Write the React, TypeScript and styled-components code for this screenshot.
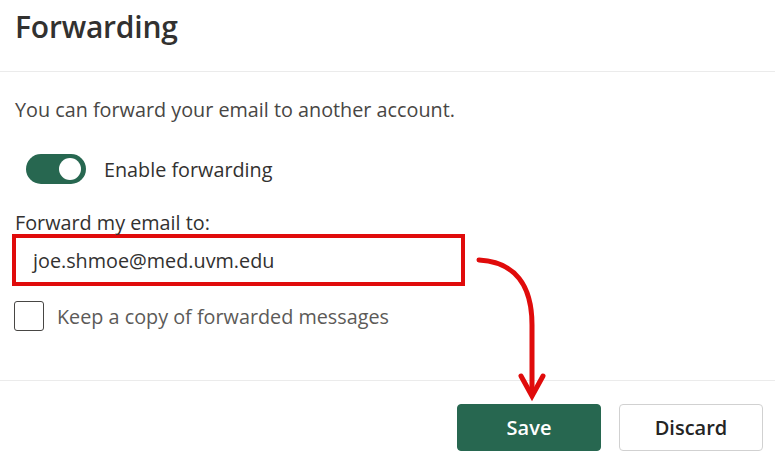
import React from 'react';
import styled, { createGlobalStyle } from 'styled-components';

const GlobalStyle = createGlobalStyle`
  html, body {
    margin: 0;
    padding: 0;
    background: #ffffff;
  }
  body {
    font-family: "Open Sans", "Noto Sans", "Liberation Sans", sans-serif;
    color: #323130;
  }
`;

const Page = styled.div`
  position: relative;
  width: 775px;
  height: 460px;
  overflow: hidden;
  background: #ffffff;
`;

const Header = styled.div`
  height: 72px;
  box-sizing: border-box;
  padding: 6px 15px 0;
  border-bottom: 1px solid #ebebeb;
`;

const Title = styled.h1`
  margin: 0;
  font-size: 30px;
  line-height: 42px;
  font-weight: 600;
  color: #323130;
  letter-spacing: -0.2px;
`;

const Body = styled.div`
  height: 309px;
  box-sizing: border-box;
  padding: 25px 15px 0;
  border-bottom: 1px solid #ebebeb;
`;

const Description = styled.p`
  margin: 0;
  font-size: 19.8px;
  line-height: 26px;
  color: #484644;
`;

const ToggleRow = styled.label`
  display: flex;
  align-items: center;
  gap: 18px;
  margin: 31px 0 0 11px;
  font-size: 19.8px;
  color: #323130;
`;

const Toggle = styled.span<{ on: boolean }>`
  position: relative;
  display: inline-block;
  flex: none;
  width: 60px;
  height: 30px;
  border-radius: 15px;
  background: ${p => (p.on ? '#276750' : '#c8c6c4')};
  &::after {
    content: '';
    position: absolute;
    top: 4px;
    left: ${p => (p.on ? '33px' : '4px')};
    width: 22px;
    height: 22px;
    border-radius: 50%;
    background: #ffffff;
  }
`;

const FieldLabel = styled.div`
  margin-top: 27px;
  font-size: 19.8px;
  line-height: 24px;
  color: #323130;
`;

const EmailInput = styled.div`
  box-sizing: border-box;
  width: 453px;
  height: 52px;
  margin: -1px 0 0 -3px;
  padding: 0 0 0 17px;
  display: flex;
  align-items: center;
  border: 4px solid #e00b0b;
  font-size: 19.8px;
  color: #323130;
`;

const CheckRow = styled.label`
  display: flex;
  align-items: center;
  gap: 13px;
  margin: 15px 0 0 -1px;
  font-size: 19.8px;
  color: #5c5a58;
`;

const CheckBox = styled.span`
  box-sizing: border-box;
  flex: none;
  width: 30px;
  height: 30px;
  border: 1px solid #484644;
  border-radius: 3px;
  background: #ffffff;
`;

const Footer = styled.div`
  display: flex;
  justify-content: flex-end;
  gap: 18px;
  padding: 23px 12px 0 0;
`;

const Button = styled.button<{ primary?: boolean }>`
  box-sizing: border-box;
  width: 144px;
  height: 47px;
  border-radius: 4px;
  font-family: inherit;
  font-size: 20px;
  font-weight: 600;
  cursor: pointer;
  border: 1px solid ${p => (p.primary ? '#276750' : '#d1d1d1')};
  background: ${p => (p.primary ? '#276750' : '#ffffff')};
  color: ${p => (p.primary ? '#ffffff' : '#242424')};
`;

const Arrow = styled.svg`
  position: absolute;
  left: 0;
  top: 0;
  pointer-events: none;
`;

export default function App() {
  return (
    <>
      <GlobalStyle />
      <Page>
        <Header>
          <Title>Forwarding</Title>
        </Header>
        <Body>
          <Description>You can forward your email to another account.</Description>
          <ToggleRow>
            <Toggle on />
            Enable forwarding
          </ToggleRow>
          <FieldLabel>Forward my email to:</FieldLabel>
          <EmailInput>joe.shmoe@med.uvm.edu</EmailInput>
          <CheckRow>
            <CheckBox />
            Keep a copy of forwarded messages
          </CheckRow>
        </Body>
        <Footer>
          <Button primary>Save</Button>
          <Button>Discard</Button>
        </Footer>
        <Arrow width="775" height="460" viewBox="0 0 775 460">
          <path
            d="M479 260 C 515 262, 532 285, 532 325 L 532 394"
            fill="none"
            stroke="#e00b0b"
            strokeWidth="5"
            strokeLinecap="round"
          />
          <path
            d="M521 376 L 532 396 L 543 376"
            fill="none"
            stroke="#e00b0b"
            strokeWidth="5"
            strokeLinecap="round"
            strokeLinejoin="miter"
          />
        </Arrow>
      </Page>
    </>
  );
}
